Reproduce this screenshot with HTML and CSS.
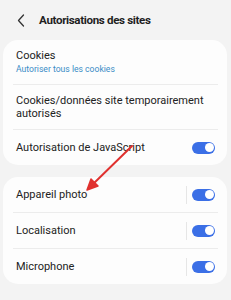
FILE: index.html
```html
<!DOCTYPE html>
<html lang="fr">
<head>
<meta charset="utf-8">
<link rel="stylesheet" href="styles.css">
</head>
<body>
<div class="screen">
  <header class="header">
    <svg class="back" width="8" height="13" viewBox="0 0 8 13"><path d="M6.5 1 L1.5 6.5 L6.5 12" fill="none" stroke="#333" stroke-width="1.3" stroke-linecap="round" stroke-linejoin="round"/></svg>
    <h1 class="title">Autorisations des sites</h1>
  </header>

  <section class="card">
    <div class="row row-two">
      <div class="label">Cookies</div>
      <div class="sub">Autoriser tous les cookies</div>
    </div>
    <div class="divider"></div>
    <div class="row row-two">
      <div class="label">Cookies/données site temporairement<br>autorisés</div>
    </div>
    <div class="divider"></div>
    <div class="row row-one">
      <div class="label grow">Autorisation de JavaScript</div>
      <span class="toggle"><span class="knob"></span></span>
    </div>
  </section>

  <section class="card">
    <div class="row row-one">
      <div class="label grow">Appareil photo</div>
      <span class="sep"></span>
      <span class="toggle"><span class="knob"></span></span>
    </div>
    <div class="divider"></div>
    <div class="row row-one">
      <div class="label grow">Localisation</div>
      <span class="sep"></span>
      <span class="toggle"><span class="knob"></span></span>
    </div>
    <div class="divider"></div>
    <div class="row row-one">
      <div class="label grow">Microphone</div>
      <span class="sep"></span>
      <span class="toggle"><span class="knob"></span></span>
    </div>
  </section>

  <svg class="arrow" width="231" height="300" viewBox="0 0 231 300">
    <line x1="132" y1="146" x2="90" y2="187" stroke="#e0312f" stroke-width="2" stroke-linecap="round"/>
    <path d="M87 190 L91 179 L98 186 Z" fill="#e0312f" stroke="#e0312f" stroke-width="1.5" stroke-linejoin="round"/>
  </svg>
</div>
</body>
</html>
```
FILE: styles.css
```css
* { box-sizing: border-box; }
html, body { margin: 0; padding: 0; }
body {
  width: 231px;
  height: 300px;
  background: #f3f3f3;
  font-family: Roboto, "Liberation Sans", sans-serif;
  color: #222;
  overflow: hidden;
}
.screen {
  position: relative;
  height: 300px;
  padding: 0 4px 0 3px;
}
.header {
  height: 40px;
  display: flex;
  align-items: center;
  padding-left: 14px;
  padding-bottom: 1px;
}
.back { display: block; margin-right: 14px; margin-top: 1px; }
.title {
  margin: 0;
  font-size: 11.6px;
  font-weight: 700;
  color: #1f1f1f;
  letter-spacing: -0.35px;
}
.card {
  background: #fdfdfd;
  border-radius: 15px;
  margin-bottom: 12px;
}
.row {
  display: flex;
  align-items: center;
  padding: 0 12px 0 13px;
}
.row-two {
  height: 44px;
  flex-direction: column;
  align-items: flex-start;
  justify-content: center;
}
.row-one { height: 35px; }
.label {
  font-size: 11px;
  line-height: 13px;
  color: #222;
}
.grow { flex: 1; }
.sub {
  font-size: 8.6px;
  line-height: 12px;
  color: #3a8cc6;
  margin-top: 1px;
}
.divider {
  height: 1px;
  background: #ececec;
  margin: 0 9px 0 10px;
}
.sep {
  width: 1px;
  height: 18px;
  background: #e6e6e6;
  margin-right: 5px;
}
.toggle {
  width: 23px;
  height: 12px;
  border-radius: 6px;
  background: #3b6fe6;
  position: relative;
  display: block;
}
.knob {
  position: absolute;
  right: 1.5px;
  top: 1.5px;
  width: 9px;
  height: 9px;
  border-radius: 50%;
  background: #fff;
}
.arrow {
  position: absolute;
  left: 0;
  top: 0;
  pointer-events: none;
}
```
